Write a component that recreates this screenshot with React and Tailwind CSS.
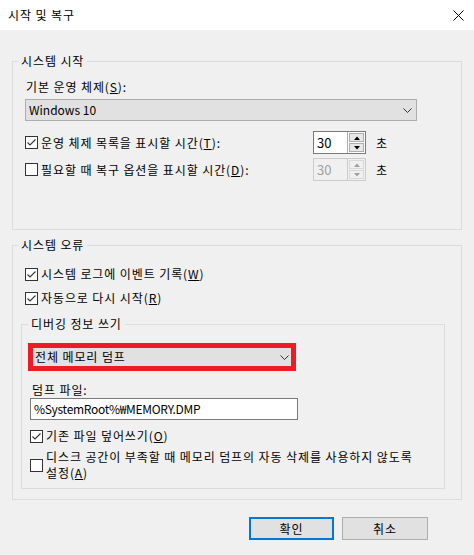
import React from "react";

const font = "font-['Noto_Sans_CJK_KR','Noto_Sans',sans-serif]";

function Check({ checked }) {
  return (
    <span className="w-[13px] h-[13px] border border-[#333333] bg-white flex items-center justify-center shrink-0">
      {checked && (
        <svg width="11" height="11" viewBox="0 0 11 11">
          <path d="M1.5 5.5 L4 8 L9.5 2.5" fill="none" stroke="#333333" strokeWidth="1.1" />
        </svg>
      )}
    </span>
  );
}

function Chevron() {
  return (
    <svg width="9" height="5" viewBox="0 0 9 5">
      <path d="M0.5 0.5 L4.5 4.5 L8.5 0.5" fill="none" stroke="#333333" strokeWidth="1" />
    </svg>
  );
}

function Spin({ disabled }) {
  const arrow = disabled ? "#a0a0a0" : "#000000";
  return (
    <div
      className={
        "flex w-[53px] h-[23px] border " +
        (disabled ? "border-[#cccccc] bg-[#f0f0f0]" : "border-[#7a7a7a] bg-white")
      }
    >
      <div
        className={
          "flex-1 flex items-center pl-[3px] text-[13px] tracking-normal " +
          (disabled ? "text-[#a0a0a0]" : "text-black")
        }
      >
        30
      </div>
      <div
        className={
          "w-[18px] flex flex-col gap-[1px] p-[1px] border-l " +
          (disabled ? "border-[#cccccc]" : "border-[#adadad]")
        }
      >
        {[0, 1].map((i) => (
          <div
            key={i}
            className={
              "flex-1 flex items-center justify-center border " +
              (disabled ? "border-[#d8d8d8] bg-[#f0f0f0]" : "border-[#adadad] bg-[#e8e8e8]")
            }
          >
            <svg width="6" height="4" viewBox="0 0 6 4">
              <path d={i === 0 ? "M0 4 L3 0.5 L6 4 Z" : "M0 0 L3 3.5 L6 0 Z"} fill={arrow} />
            </svg>
          </div>
        ))}
      </div>
    </div>
  );
}

export default function App() {
  return (
    <div className={"w-[474px] h-[555px] bg-[#f0f0f0] text-[12px] leading-[16px] tracking-[0.9px] text-black " + font}>
      {/* title bar */}
      <div className="h-[30px] bg-white flex items-center justify-between pl-[8px] pr-[10px]">
        <span>시작 및 복구</span>
        <svg width="11" height="11" viewBox="0 0 11 11">
          <path d="M0.5 0.5 L10.5 10.5 M10.5 0.5 L0.5 10.5" stroke="#000000" strokeWidth="1" />
        </svg>
      </div>

      <div className="px-[12px]">
        {/* 시스템 시작 */}
        <fieldset className="mt-[23px] h-[177px] border border-[#dcdcdc]">
          <legend className="ml-[5px] px-[3px]">시스템 시작</legend>
          <div className="px-[12px]">
            <div className="mt-[10px] ml-[1px]">
              기본 운영 체제(<u>S</u>):
            </div>
            <div className="mt-[4px] w-[392px] h-[22px] border border-[#adadad] bg-[#e1e1e1] flex items-center justify-between pl-[3px] pr-[4px]">
              <span className="tracking-normal">Windows 10</span>
              <Chevron />
            </div>
            <div className="mt-[10px] h-[23px] flex items-center">
              <div className="w-[288px] flex items-center gap-[3px]">
                <Check checked />
                <span>
                  운영 체제 목록을 표시할 시간(<u>T</u>):
                </span>
              </div>
              <Spin />
              <span className="ml-[10px]">초</span>
            </div>
            <div className="mt-[4px] h-[23px] flex items-center">
              <div className="w-[288px] flex items-center gap-[3px]">
                <Check />
                <span>
                  필요할 때 복구 옵션을 표시할 시간(<u>D</u>):
                </span>
              </div>
              <Spin disabled />
              <span className="ml-[10px]">초</span>
            </div>
          </div>
        </fieldset>

        {/* 시스템 오류 */}
        <fieldset className="mt-[7px] h-[263px] border border-[#dcdcdc]">
          <legend className="ml-[5px] px-[3px]">시스템 오류</legend>
          <div className="px-[12px]">
            <div className="mt-[13px] flex items-center gap-[3px]">
              <Check checked />
              <span>
                시스템 로그에 이벤트 기록(<u>W</u>)
              </span>
            </div>
            <div className="mt-[8px] flex items-center gap-[3px]">
              <Check checked />
              <span>
                자동으로 다시 시작(<u>R</u>)
              </span>
            </div>
          </div>

          <fieldset className="mt-[10px] ml-[8px] w-[424px] h-[173px] border border-[#dcdcdc]">
            <legend className="ml-[6px] px-[3px]">디버깅 정보 쓰기</legend>
            <div className="pl-[6px]">
              <div className="mt-[11px] w-[268px] h-[28px] border-[5px] border-[#ed1c24]">
                <div className="h-full bg-[#e1e1e1] flex items-center justify-between pl-[2px] pr-[2px]">
                  <span>전체 메모리 덤프</span>
                  <Chevron />
                </div>
              </div>
              <div className="mt-[11px] ml-[4px]">덤프 파일:</div>
              <div className="ml-[2px] w-[268px] h-[22px] border border-[#7a7a7a] bg-white flex items-center pl-[3px] tracking-[-0.3px]">
                %SystemRoot%₩MEMORY.DMP
              </div>
              <div className="mt-[8px] ml-[2px] flex items-center gap-[3px]">
                <Check checked />
                <span>
                  기존 파일 덮어쓰기(<u>O</u>)
                </span>
              </div>
              <div className="mt-[5px] ml-[2px] flex items-center gap-[3px]">
                <Check />
                <span>
                  디스크 공간이 부족할 때 메모리 덤프의 자동 삭제를 사용하지 않도록
                  <br />
                  설정(<u>A</u>)
                </span>
              </div>
            </div>
          </fieldset>
        </fieldset>
      </div>

      {/* buttons */}
      <div className="mt-[17px] flex justify-end gap-[8px] pr-[46px]">
        <button className="w-[85px] h-[23px] border-2 border-[#0078d7] bg-[#e1e1e1] flex items-center justify-center">
          확인
        </button>
        <button className="w-[86px] h-[23px] border border-[#adadad] bg-[#e1e1e1] flex items-center justify-center">
          취소
        </button>
      </div>
    </div>
  );
}
